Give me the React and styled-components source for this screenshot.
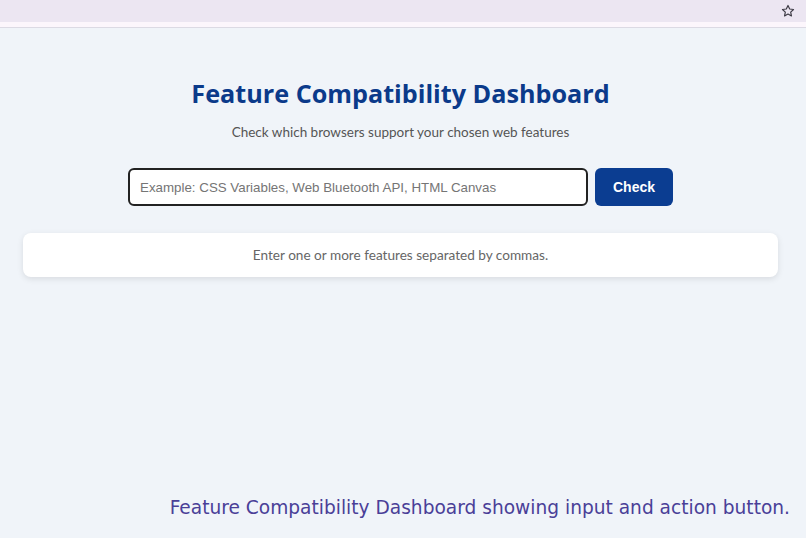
import styled, { createGlobalStyle } from 'styled-components'

const GlobalStyle = createGlobalStyle`
    html, body {
        margin: 0;
        padding: 0;
        height: 100%;
        background: #f0f4f9;
    }
    #root {
        height: 100%;
    }
`

const Page = styled.div`
    height: 100%;
    display: flex;
    flex-direction: column;
    font-family: 'Lato', 'Open Sans', sans-serif;
`

const BrowserBar = styled.header`
    height: 22px;
    background: #ece6f2;
    display: flex;
    align-items: center;
    justify-content: flex-end;
    padding-right: 11px;
    color: #3c3a44;
`

const BarStrip = styled.div`
    height: 5px;
    background: #fcf6fc;
    border-bottom: 1px solid #dcdae4;
`

const Main = styled.main`
    flex: 1;
    margin: 0 28px 0 23px;
    padding-top: 48px;
    display: flex;
    flex-direction: column;
    align-items: center;
`

const Title = styled.h1`
    margin: 0;
    font-family: 'Open Sans', sans-serif;
    font-size: 25.2px;
    font-weight: 700;
    color: #0b3a8a;
`

const Subtitle = styled.p`
    margin: 14px 0 0;
    font-size: 13.5px;
    color: #555;
`

const SearchRow = styled.div`
    margin-top: 28px;
    display: flex;
    gap: 7px;
`

const FeatureInput = styled.input`
    box-sizing: border-box;
    width: 460px;
    height: 38px;
    border: 2px solid #222;
    border-radius: 6px;
    background: #fff;
    padding: 0 10px;
    font-family: 'Liberation Sans', Arial, sans-serif;
    font-size: 13.33px;
    outline: none;

    &::placeholder {
        color: #757575;
    }
`

const CheckButton = styled.button`
    width: 78px;
    height: 38px;
    border: none;
    border-radius: 6px;
    background: #0b3d91;
    color: #fff;
    font-family: 'Liberation Sans', Arial, sans-serif;
    font-size: 14px;
    font-weight: 700;
    cursor: pointer;
`

const ResultCard = styled.section`
    align-self: stretch;
    margin-top: 27px;
    height: 44px;
    background: #fff;
    border-radius: 8px;
    box-shadow: 0 2px 6px rgba(0, 0, 0, 0.1);
    display: flex;
    align-items: center;
    justify-content: center;
    font-size: 13.6px;
    color: #666;
`

const Caption = styled.footer`
    text-align: right;
    padding: 0 16px 20px 0;
    font-family: 'DejaVu Sans', sans-serif;
    font-size: 18.6px;
    color: #4a3f98;
`

function StarIcon() {
    return (
        <svg width="14" height="14" viewBox="0 0 24 24" fill="none" stroke="currentColor" strokeWidth="2" strokeLinejoin="round">
            <polygon points="12 2.5 14.9 8.6 21.5 9.4 16.6 13.9 17.9 20.5 12 17.2 6.1 20.5 7.4 13.9 2.5 9.4 9.1 8.6" />
        </svg>
    )
}

function App() {
    return (
        <Page>
            <GlobalStyle />
            <BrowserBar>
                <StarIcon />
            </BrowserBar>
            <BarStrip />
            <Main>
                <Title>Feature Compatibility Dashboard</Title>
                <Subtitle>Check which browsers support your chosen web features</Subtitle>
                <SearchRow>
                    <FeatureInput placeholder="Example: CSS Variables, Web Bluetooth API, HTML Canvas" />
                    <CheckButton>Check</CheckButton>
                </SearchRow>
                <ResultCard>Enter one or more features separated by commas.</ResultCard>
            </Main>
            <Caption>Feature Compatibility Dashboard showing input and action button.</Caption>
        </Page>
    )
}

export default App
